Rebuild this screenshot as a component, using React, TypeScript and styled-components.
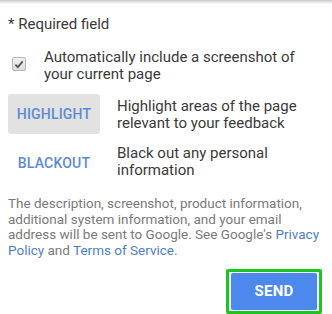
import React from 'react';
import styled, { createGlobalStyle } from 'styled-components';

const GlobalStyle = createGlobalStyle`
  html, body {
    margin: 0;
    padding: 0;
    background: #fff;
  }
  body {
    font-family: Roboto, "Noto Sans", Arial, sans-serif;
    -webkit-font-smoothing: antialiased;
  }
`;

const Panel = styled.div`
  width: 332px;
  height: 314px;
  background: #fff;
  overflow: hidden;
  display: flex;
  flex-direction: column;
`;

const TopShadow = styled.div`
  height: 4px;
  flex-shrink: 0;
  background: linear-gradient(#c8c8c8, rgba(255, 255, 255, 0));
`;

const Content = styled.div`
  padding: 12px 4px 0 8px;
  display: flex;
  flex-direction: column;
`;

const Required = styled.div`
  font-size: 15px;
  line-height: 17px;
  color: #3a3a3a;
`;

const CheckRow = styled.label`
  display: flex;
  align-items: flex-start;
  margin-top: 16px;
  gap: 18px;
`;

const CheckBox = styled.span`
  margin: 8px 0 0 4px;
  width: 12px;
  height: 12px;
  border: 1px solid #b9b9b9;
  border-radius: 2px;
  background: linear-gradient(#f0f0f0, #dcdcdc);
  display: flex;
  align-items: center;
  justify-content: center;
  flex-shrink: 0;
`;

const RowText = styled.div`
  font-size: 15px;
  line-height: 17px;
  color: #3a3a3a;
`;

const ToolRow = styled.div<{ $top: number }>`
  display: flex;
  align-items: flex-start;
  gap: 17px;
  margin-top: ${p => p.$top}px;
`;

const ToolButton = styled.button<{ $active?: boolean }>`
  width: 92px;
  height: 40px;
  border: none;
  border-radius: 3px;
  background: ${p => (p.$active ? '#e2e2e2' : 'transparent')};
  color: #5b8bd6;
  font-family: Roboto, Arial, sans-serif;
  font-size: 14px;
  font-weight: 500;
  letter-spacing: 0.2px;
  text-transform: uppercase;
  padding: 0;
  flex-shrink: 0;
  cursor: pointer;
`;

const ToolText = styled(RowText)<{ $top: number }>`
  margin-top: ${p => p.$top}px;
`;

const Notice = styled.p`
  margin: 13px 0 0 0;
  font-size: 13.5px;
  line-height: 15.7px;
  color: #7a7a7a;
  white-space: nowrap;
`;

const NoticeLink = styled.a`
  color: #4f7fcb;
  text-decoration: none;
`;

const Footer = styled.div`
  display: flex;
  justify-content: flex-end;
  padding-right: 10px;
  margin-top: 10px;
`;

const SendFrame = styled.div`
  border: 3px solid #1ec51e;
  border-radius: 2px;
  padding: 1px 2px;
  background: #f4f8ff;
  display: flex;
`;

const SendButton = styled.button`
  width: 86px;
  height: 37px;
  border: none;
  border-radius: 2px;
  background: #4d88ec;
  color: #fff;
  font-family: Roboto, Arial, sans-serif;
  font-size: 15px;
  font-weight: 700;
  letter-spacing: 0.2px;
  cursor: pointer;
`;

const Check = () => (
  <svg width="10" height="9" viewBox="0 0 11 10">
    <path d="M1.5 5.2 L4.2 8 L9.6 1.6" fill="none" stroke="#555" strokeWidth="2" strokeLinejoin="round" />
  </svg>
);

export default function App() {
  return (
    <Panel>
      <GlobalStyle />
      <TopShadow />
      <Content>
        <Required>* Required field</Required>
        <CheckRow>
          <CheckBox>
            <Check />
          </CheckBox>
          <RowText>
            Automatically include a screenshot of
            <br />
            your current page
          </RowText>
        </CheckRow>
        <ToolRow $top={11}>
          <ToolButton $active>Highlight</ToolButton>
          <ToolText $top={4}>
            Highlight areas of the page
            <br />
            relevant to your feedback
          </ToolText>
        </ToolRow>
        <ToolRow $top={9}>
          <ToolButton>Blackout</ToolButton>
          <ToolText $top={2}>
            Black out any personal
            <br />
            information
          </ToolText>
        </ToolRow>
        <Notice>
          The description, screenshot, product information,
          <br />
          additional system information, and your email
          <br />
          address will be sent to Google. See Google's <NoticeLink href="#">Privacy</NoticeLink>
          <br />
          <NoticeLink href="#">Policy</NoticeLink> and <NoticeLink href="#">Terms of Service</NoticeLink>.
        </Notice>
      </Content>
      <Footer>
        <SendFrame>
          <SendButton>SEND</SendButton>
        </SendFrame>
      </Footer>
    </Panel>
  );
}
